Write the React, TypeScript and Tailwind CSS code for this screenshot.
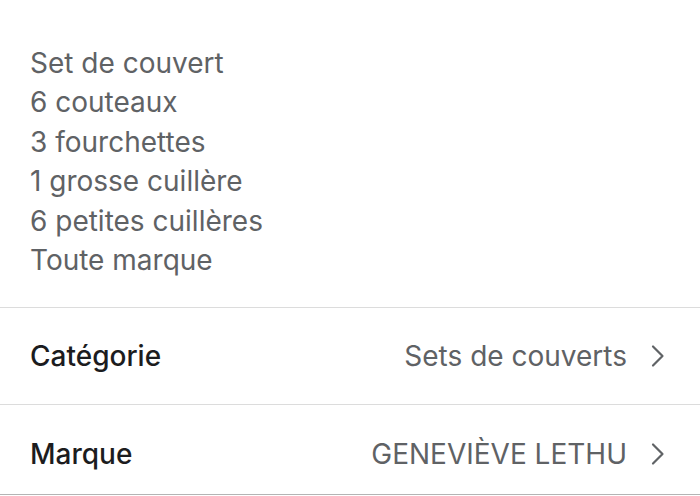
import React from "react";

const lines = [
  "Set de couvert",
  "6 couteaux",
  "3 fourchettes",
  "1 grosse cuillère",
  "6 petites cuillères",
  "Toute marque",
];

function Chevron() {
  return (
    <svg width="14" height="24" viewBox="0 0 14 24" fill="none" className="shrink-0">
      <path d="M2 2.5 L11.5 12 L2 21.5" stroke="#606366" strokeWidth="2.2" strokeLinecap="round" strokeLinejoin="round" />
    </svg>
  );
}

function Row({ label, value, className }: { label: string; value: string; className: string }) {
  return (
    <div className={`flex items-center justify-between border-b pl-[30px] pr-[35px] ${className}`}>
      <span className="text-[28px] font-medium text-[#1c1c1e]">{label}</span>
      <div className="flex items-center gap-[24px]">
        <span className="text-[28px] text-[#5f6265]">{value}</span>
        <Chevron />
      </div>
    </div>
  );
}

export default function App() {
  return (
    <div className="h-[496px] w-[700px] overflow-hidden bg-white" style={{ fontFamily: "Inter, 'Noto Sans', sans-serif" }}>
      <div className="border-b border-[#dcdcdc] pl-[30px] pb-[27px] pt-[44px]">
        {lines.map((l) => (
          <div key={l} className="text-[28px] leading-[39.4px] text-[#5f6265]">
            {l}
          </div>
        ))}
      </div>
      <Row label="Catégorie" value="Sets de couverts" className="h-[97px] border-[#dcdcdc]" />
      <Row label="Marque" value="GENEVIÈVE LETHU" className="h-[90px] pt-[9px] border-[#b4b4b4]" />
    </div>
  );
}
